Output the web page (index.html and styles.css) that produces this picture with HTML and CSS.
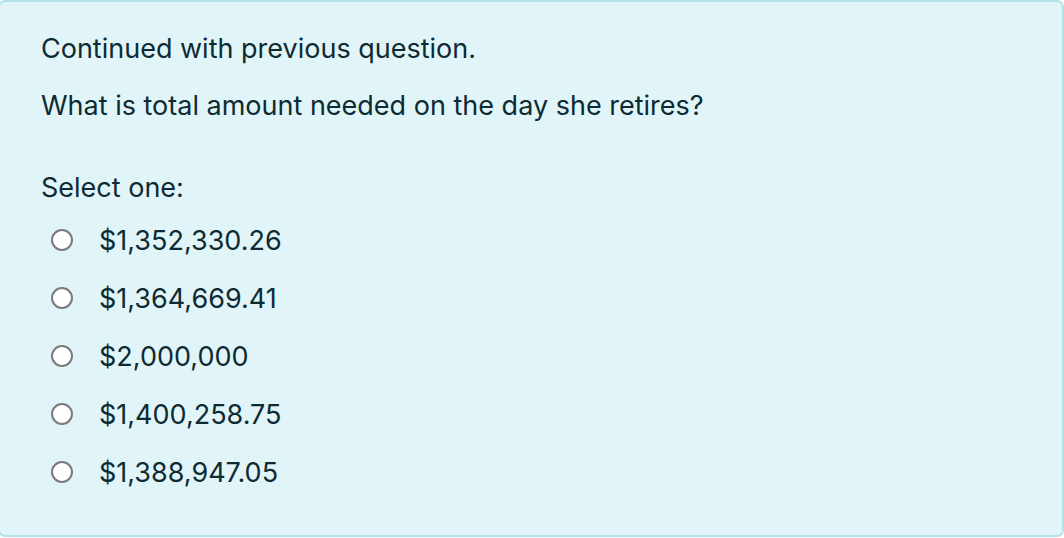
FILE: index.html
```html
<!DOCTYPE html>
<html>
<head>
<meta charset="utf-8">
<link rel="stylesheet" href="styles.css">
</head>
<body>
<div class="que">
  <p class="qtext">Continued with previous question.</p>
  <p class="qtext">What is total amount needed on the day she retires?</p>
  <div class="prompt">Select one:</div>
  <div class="answers">
    <label class="opt"><span class="radio"></span><span class="lbl">$1,352,330.26</span></label>
    <label class="opt"><span class="radio"></span><span class="lbl">$1,364,669.41</span></label>
    <label class="opt"><span class="radio"></span><span class="lbl">$2,000,000</span></label>
    <label class="opt"><span class="radio"></span><span class="lbl">$1,400,258.75</span></label>
    <label class="opt"><span class="radio"></span><span class="lbl">$1,388,947.05</span></label>
  </div>
</div>
</body>
</html>
```
FILE: styles.css
```css
html, body {
  margin: 0;
  padding: 0;
  background: #ffffff;
}
body {
  font-family: Inter, "Liberation Sans", Arial, sans-serif;
  color: #0d2b33;
  overflow: hidden;
}
.que {
  box-sizing: border-box;
  width: 1066px;
  height: 537px;
  margin-left: -2px;
  background: #e1f4f8;
  border: 2px solid #b3e1e8;
  border-radius: 7px;
  padding: 29px 0 0 41px;
}
.qtext {
  margin: 0 0 22px 0;
  font-size: 27px;
  line-height: 35px;
}
.prompt {
  margin-top: 47px;
  font-size: 27px;
  line-height: 35px;
}
.answers {
  display: flex;
  flex-direction: column;
  margin-top: 6px;
  padding-left: 10px;
}
.opt {
  display: flex;
  align-items: center;
  height: 58px;
}
.radio {
  box-sizing: border-box;
  width: 22px;
  height: 22px;
  border-radius: 50%;
  border: 2px solid #7a7a7a;
  background: #ffffff;
  margin-right: 26px;
}
.lbl {
  font-size: 27px;
}
```
